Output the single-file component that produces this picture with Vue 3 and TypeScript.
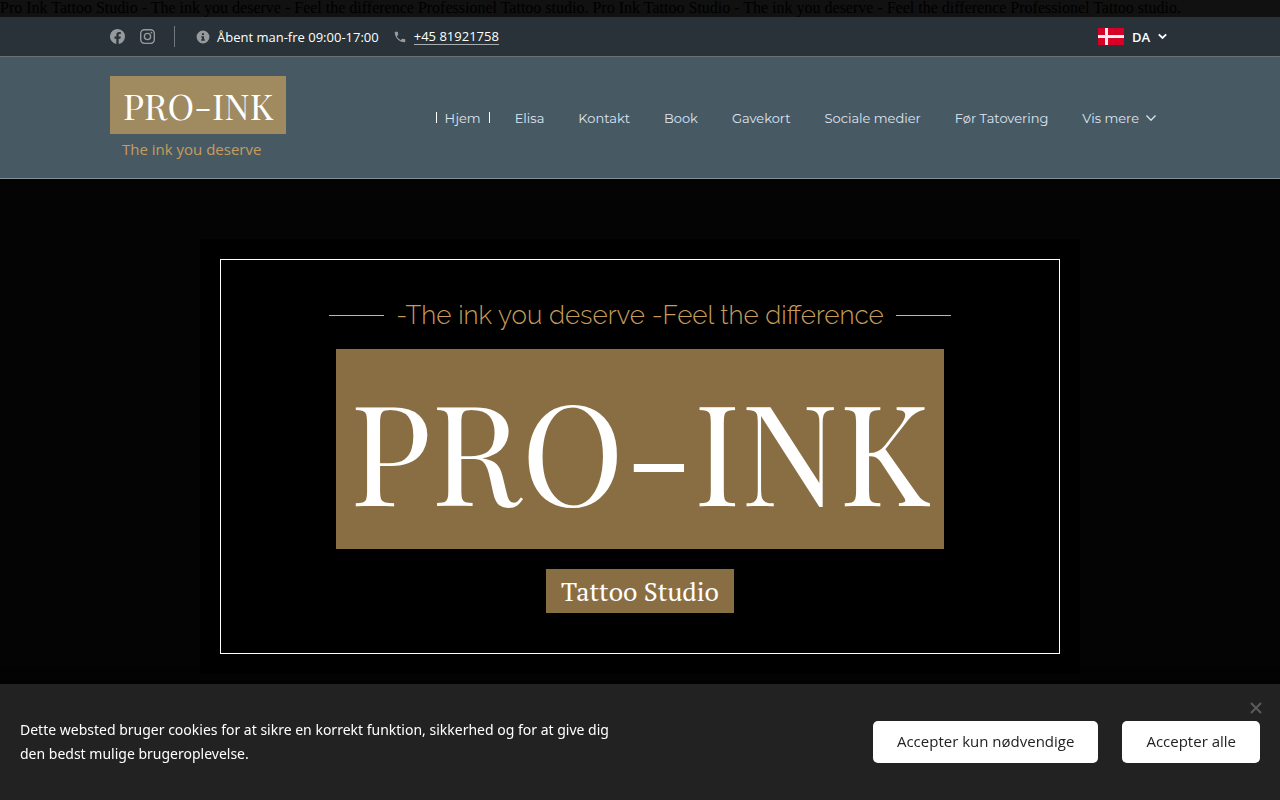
<script setup lang="ts">
import { ref } from 'vue'

const navItems: string[] = ['Hjem', 'Elisa', 'Kontakt', 'Book', 'Gavekort', 'Sociale medier', 'Før Tatovering']
const cookieBarOpen = ref(true)
</script>

<template>
  <div class="page">
    <p class="seo">Pro Ink Tattoo Studio - The ink you deserve - Feel the difference Professionel Tattoo studio. Pro Ink Tattoo Studio - The ink you deserve - Feel the difference Professionel Tattoo studio.</p>

    <div class="topbar">
      <div class="wrap topbar-row">
        <div class="social">
          <a href="#" aria-label="Facebook">
            <svg width="15" height="15" viewBox="0 0 24 24"><path fill="currentColor" d="M24 12a12 12 0 1 0-13.900 11.900v-8.400H7.100V12h3V9.400c0-3 1.800-4.700 4.500-4.700 1.300 0 2.700.2 2.700.2v3h-1.500c-1.500 0-2 .9-2 1.900V12h3.400l-.6 3.500h-2.800v8.400A12 12 0 0 0 24 12z" /></svg>
          </a>
          <a href="#" aria-label="Instagram">
            <svg width="15" height="15" viewBox="0 0 24 24" fill="none" stroke="currentColor" stroke-width="2.2"><rect x="1.1" y="1.1" width="21.8" height="21.8" rx="6" /><circle cx="12" cy="12" r="5" /><circle cx="18.3" cy="5.7" r="1.4" fill="currentColor" stroke="none" /></svg>
          </a>
        </div>
        <div class="contact">
          <span class="info">
            <svg width="14" height="14" viewBox="0 0 24 24"><path fill="currentColor" fill-rule="evenodd" d="M12 1a11 11 0 1 0 0 22 11 11 0 0 0 0-22zm-1.800 4.500h3.600v3.200h-3.600zM9 10.500h4.800V16H15v2.300H9V16h1.200v-3.200H9z" /></svg>
            Åbent man-fre 09:00-17:00
          </span>
          <span class="info">
            <svg width="14" height="14" viewBox="0 0 24 24"><path fill="currentColor" d="M6.600 10.800c1.400 2.800 3.800 5.100 6.600 6.600l2.200-2.200c.3-.3.700-.4 1-.2 1.100.4 2.300.6 3.600.6.600 0 1 .4 1 1V20c0 .600-.4 1-1 1C10.600 21 3 13.400 3 4c0-.6.400-1 1-1h3.500c.6 0 1 .4 1 1 0 1.300.2 2.500.6 3.600.1.300 0 .7-.2 1z" /></svg>
            <a class="phone" href="tel:+4581921758">+45 81921758</a>
          </span>
        </div>
        <button class="lang" type="button">
          <svg width="26" height="17" viewBox="0 0 26 17"><path fill="#d80027" d="M0 0h26v17H0z" /><path fill="#f0f0f0" d="M7 0h3v17H7zM0 7h26v3H0z" /></svg>
          DA
          <svg width="9" height="7" viewBox="0 0 9 7" fill="none" stroke="currentColor" stroke-width="1.800"><path d="M.8 1.300 4.500 5 8.200 1.300" /></svg>
        </button>
      </div>
    </div>

    <header class="header">
      <div class="wrap header-row">
        <div class="brand">
          <a class="logo" href="#">PRO-INK</a>
          <span class="tagline">The ink you deserve</span>
        </div>
        <nav class="nav">
          <a v-for="(item, i) in navItems" :key="item" href="#" :class="{ active: i === 0 }">{{ item }}</a>
          <a href="#" class="more">Vis mere
            <svg width="10" height="6" viewBox="0 0 10 6" fill="none" stroke="currentColor" stroke-width="1.300"><path d="M.5.500 5 5.200 9.500.5" /></svg>
          </a>
        </nav>
      </div>
    </header>

    <main class="hero">
      <section class="panel">
        <div class="frame">
          <h2 class="motto"><span>-The ink you deserve -Feel the difference</span></h2>
          <h1 class="title">PRO-INK</h1>
          <p class="subtitle">Tattoo Studio</p>
        </div>
      </section>
    </main>

    <aside v-if="cookieBarOpen" class="cookies" aria-label="Cookies">
      <p>Dette websted bruger cookies for at sikre en korrekt funktion, sikkerhed og for at give dig den bedst mulige brugeroplevelse.</p>
      <div class="actions">
        <button type="button" @click="cookieBarOpen = false">Accepter kun nødvendige</button>
        <button type="button" @click="cookieBarOpen = false">Accepter alle</button>
      </div>
      <button class="close" type="button" aria-label="Luk" @click="cookieBarOpen = false">
        <svg width="12" height="12" viewBox="0 0 12 12" fill="none" stroke="currentColor" stroke-width="2"><path d="m1 1 10 10M11 1 1 11" /></svg>
      </button>
    </aside>
  </div>
</template>

<style>
body {
  background: #111;
}
</style>

<style scoped>
.page {
  display: flex;
  flex-direction: column;
  min-height: 100vh;
  font-family: "Open Sans", "Noto Sans", sans-serif;
}

p, h1, h2 {
  margin: 0;
  font-weight: 400;
}

a {
  color: inherit;
  text-decoration: none;
}

button {
  border: 0;
  font-family: inherit;
  cursor: pointer;
}

svg {
  display: block;
  flex: none;
}

.seo {
  padding-bottom: 1px;
  font: 16px/16px "Liberation Serif", serif;
  color: #000;
}

.wrap {
  box-sizing: border-box;
  width: 100%;
  max-width: 1060px;
  margin: 0 auto;
}

.topbar {
  background: #283238;
  border-bottom: 1px solid #6b6f71;
}

.topbar-row {
  display: flex;
  align-items: center;
  height: 39px;
  color: #fff;
  font-size: 13px;
  font-weight: 500;
  line-height: 16px;
}

.social {
  display: flex;
  align-items: center;
  gap: 15px;
  height: 21px;
  padding-right: 19px;
  border-right: 1px solid #72787c;
  color: #969a9d;
}

.contact {
  display: flex;
  gap: 14px;
  margin-left: 21px;
}

.info {
  display: flex;
  align-items: center;
  gap: 7px;
}

.info svg {
  color: #969a9d;
}

.phone {
  border-bottom: 1px solid #a9adaf;
}

.lang {
  display: flex;
  align-items: center;
  gap: 8px;
  margin-left: auto;
  padding: 0 3px;
  background: none;
  color: #fff;
  font-size: 13px;
  font-weight: 600;
}

.header {
  background: #475a64;
  border-bottom: 1px solid #839096;
}

.header-row {
  display: flex;
  align-items: center;
  justify-content: space-between;
  min-height: 121px;
}

.brand {
  display: flex;
  flex-direction: column;
  padding-top: 4px;
}

.logo {
  padding: 0 13px;
  background: #a08a60;
  color: #fff;
  font: 36px/58px "Playfair Display", "Liberation Serif", serif;
}

.tagline {
  padding-left: 12px;
  color: #c69c5b;
  font-size: 15px;
  line-height: 30px;
}

.nav {
  display: flex;
  gap: 16px;
  padding-right: 5px;
  color: #dfe3f0;
  font: 13px/20px Montserrat, Lato, sans-serif;
}

.nav a {
  display: flex;
  align-items: center;
  padding: 0 9px;
  white-space: nowrap;
}

.nav .active::before,
.nav .active::after {
  content: "";
  width: 1px;
  height: 11px;
  background: #fff;
}

.nav .active {
  gap: 8px;
  padding: 0;
}

.nav .more {
  gap: 7px;
}

.hero {
  flex: 1;
  padding: 60px 20px;
  background: #040404;
}

.panel {
  box-sizing: border-box;
  max-width: 880px;
  margin: 0 auto;
  padding: 20px;
  background: #000;
}

.frame {
  display: flex;
  flex-direction: column;
  align-items: center;
  padding: 35px 20px 40px;
  border: 1px solid #fff;
}

.motto {
  display: flex;
  align-items: center;
  gap: 12px;
  color: #c69c5b;
  font: 300 26px/40px Raleway, Lato, sans-serif;
}

.motto::before,
.motto::after {
  content: "";
  width: 55px;
  height: 1px;
  background: #b8b3c4;
}

.title {
  margin-top: 14px;
  padding: 0 14px;
  background: #8a6e43;
  color: #fff;
  font: 139px/200px "Playfair Display", "Liberation Serif", serif;
}

.subtitle {
  margin-top: 20px;
  padding: 0 15px;
  background: #8a6e43;
  color: #fff;
  font: 26px/44px "PT Serif", "Liberation Serif", serif;
}

.cookies {
  position: fixed;
  inset: auto 0 0;
  box-sizing: border-box;
  display: flex;
  align-items: center;
  justify-content: space-between;
  min-height: 116px;
  padding: 20px;
  background: #222;
  color: #fff;
  box-shadow: 0 0 12px #000;
}

.cookies p {
  max-width: 604px;
  font-family: "Noto Sans", "Open Sans", sans-serif;
  font-size: 14px;
  line-height: 24px;
}

.actions {
  display: flex;
  gap: 24px;
}

.actions button {
  height: 42px;
  padding: 0 24px 2px;
  border-radius: 5px;
  background: #fff;
  color: #222;
  font-size: 15px;
  white-space: nowrap;
}

.close {
  position: absolute;
  top: 18px;
  right: 18px;
  padding: 0;
  background: none;
  color: #5b5b5b;
}
</style>
